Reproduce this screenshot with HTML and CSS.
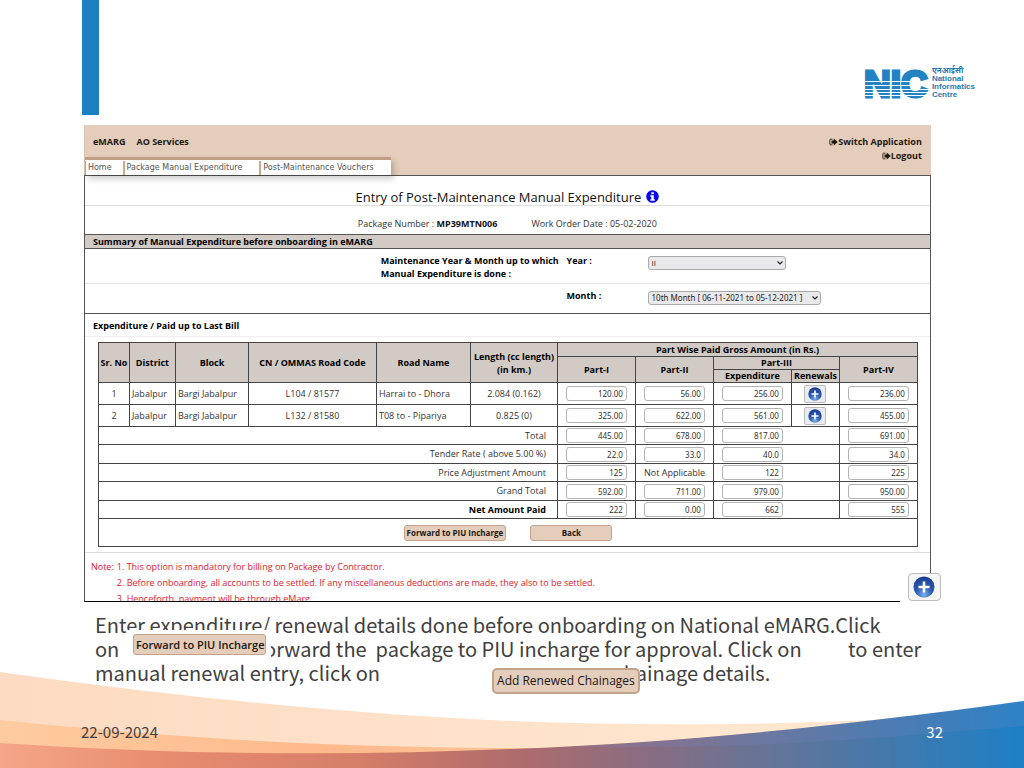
FILE: index.html
```
<!DOCTYPE html>
<html lang="en">
<head>
<meta charset="utf-8">
<meta name="viewport" content="width=device-width, initial-scale=1">
<title>Entry of Post-Maintenance Manual Expenditure</title>
<link rel="stylesheet" href="styles.css">
</head>
<body>
<svg width="0" height="0" class="defs" aria-hidden="true">
  <defs>
    <radialGradient id="ball" cx="50%" cy="85%" r="80%">
      <stop offset="0" stop-color="#7db4e8"/><stop offset="0.45" stop-color="#2f5db5"/><stop offset="1" stop-color="#1c3f93"/>
    </radialGradient>
    <symbol id="plus" viewBox="0 0 22 22">
      <circle cx="11" cy="11" r="10.5" fill="url(#ball)"/>
      <path d="M11 5.5v11M5.5 11h11" stroke="#fff" stroke-width="2.6"/>
    </symbol>
    <symbol id="exit" viewBox="0 0 16 14">
      <path d="M6 2H3Q1.500 2 1.500 3.500V10.500Q1.500 12 3 12H6" fill="none" stroke="currentColor" stroke-width="1.600"/>
      <path d="M4.500 4.500H8.500V0.800L15.500 7L8.500 13.200V9.500H4.500Z" fill="currentColor"/>
    </symbol>
  </defs>
</svg>
<div class="slide">
  <header class="slide-head">
    <div class="accent"></div>
    <div class="logo">
      <svg class="logo-mark" width="66" height="32" viewBox="0 0 66 32" role="img" aria-label="NIC">
        <text x="0" y="30" class="logo-letters">NIC</text>
        <path d="M-2 14.500H66M-2 18.500H66M-2 22.500H66M-2 25.500H66M-2 28.500H66" stroke="#fff" stroke-width="1"/>
      </svg>
      <div class="logo-words"><span>एनआईसी</span><span>National</span><span>Informatics</span><span>Centre</span></div>
    </div>
  </header>

  <main class="main">
    <section class="app">
      <div class="app-head">
        <div class="app-top">
          <nav class="menu"><a href="#">eMARG</a><a href="#">AO Services</a></nav>
          <div class="session">
            <a href="#"><svg width="9" height="8"><use href="#exit"/></svg>Switch Application</a>
            <a href="#"><svg width="9" height="8"><use href="#exit"/></svg>Logout</a>
          </div>
        </div>
        <nav class="tabs"><a href="#">Home</a><a href="#">Package Manual Expenditure</a><a href="#">Post-Maintenance Vouchers</a></nav>
      </div>
      <div class="app-body">
        <h1 class="title">Entry of Post-Maintenance Manual Expenditure
          <svg width="13" height="13" viewBox="0 0 13 13" role="img" aria-label="Info"><circle cx="6.500" cy="6.500" r="6.300" fill="#0505ee"/><path d="M5.300 2.200h2.500v2H5.300zM4.300 5.300h3.500v4h1v1.500H4.300V9.300h1V6.800h-1z" fill="#fff"/></svg>
        </h1>
        <div class="package"><span>Package Number : <b>MP39MTN006</b></span><span>Work Order Date : 05-02-2020</span></div>
        <h2 class="summary">Summary of Manual Expenditure before onboarding in eMARG</h2>
        <div class="form-row">
          <span class="form-caption">Maintenance Year &amp; Month up to which Manual Expenditure is done :</span>
          <label for="year">Year :</label>
          <div class="select select-year"><select id="year"><option>II</option></select><svg width="6" height="4" viewBox="0 0 6 4"><path d="M0.500 0.500L3 3L5.500 0.500" fill="none" stroke="#222" stroke-width="1.200"/></svg></div>
        </div>
        <div class="form-row form-row-last">
          <span></span>
          <label for="month">Month :</label>
          <div class="select select-month"><select id="month"><option>10th Month [ 06-11-2021 to 05-12-2021 ]</option></select><svg width="6" height="4" viewBox="0 0 6 4"><path d="M0.500 0.500L3 3L5.500 0.500" fill="none" stroke="#222" stroke-width="1.200"/></svg></div>
        </div>
        <h2 class="subhead">Expenditure / Paid up to Last Bill</h2>
        <div class="table-wrap">
          <table class="grid">
            <colgroup><col class="c-sr"><col class="c-district"><col class="c-block"><col class="c-code"><col class="c-road"><col class="c-length"><col class="c-part"><col class="c-part"><col class="c-part"><col class="c-renew"><col class="c-part"></colgroup>
            <thead>
              <tr class="r-head"><th rowspan="3">Sr. No</th><th rowspan="3">District</th><th rowspan="3">Block</th><th rowspan="3">CN / OMMAS Road Code</th><th rowspan="3">Road Name</th><th rowspan="3" class="tall">Length (cc length)<br>(in km.)</th><th colspan="5">Part Wise Paid Gross Amount (in Rs.)</th></tr>
              <tr class="r-head"><th rowspan="2">Part-I</th><th rowspan="2">Part-II</th><th colspan="2">Part-III</th><th rowspan="2">Part-IV</th></tr>
              <tr class="r-head"><th>Expenditure</th><th>Renewals</th></tr>
            </thead>
            <tbody>
              <tr class="r-road"><td class="mid">1</td><td>Jabalpur</td><td>Bargi Jabalpur</td><td class="mid">L104 / 81577</td><td>Harrai to - Dhora</td><td class="mid">2.084 (0.162)</td>
                <td class="amt"><input aria-label="Road 1 Part-I" value="120.00"></td><td class="amt"><input aria-label="Road 1 Part-II" value="56.00"></td><td class="amt"><input aria-label="Road 1 Part-III" value="256.00"></td><td class="mid"><button class="add" aria-label="Add renewal for road 1"><svg width="14" height="14"><use href="#plus"/></svg></button></td><td class="amt"><input aria-label="Road 1 Part-IV" value="236.00"></td></tr>
              <tr class="r-road"><td class="mid">2</td><td>Jabalpur</td><td>Bargi Jabalpur</td><td class="mid">L132 / 81580</td><td>T08 to - Pipariya</td><td class="mid">0.825 (0)</td>
                <td class="amt"><input aria-label="Road 2 Part-I" value="325.00"></td><td class="amt"><input aria-label="Road 2 Part-II" value="622.00"></td><td class="amt"><input aria-label="Road 2 Part-III" value="561.00"></td><td class="mid"><button class="add" aria-label="Add renewal for road 2"><svg width="14" height="14"><use href="#plus"/></svg></button></td><td class="amt"><input aria-label="Road 2 Part-IV" value="455.00"></td></tr>
              <tr class="r-sum"><td colspan="6" class="sum">Total</td><td class="amt"><input aria-label="Total Part-I" value="445.00"></td><td class="amt"><input aria-label="Total Part-II" value="678.00"></td><td colspan="2" class="amt"><input aria-label="Total Part-III" value="817.00"></td><td class="amt"><input aria-label="Total Part-IV" value="691.00"></td></tr>
              <tr class="r-sum"><td colspan="6" class="sum">Tender Rate ( above 5.00 %)</td><td class="amt"><input aria-label="Tender rate Part-I" value="22.0"></td><td class="amt"><input aria-label="Tender rate Part-II" value="33.0"></td><td colspan="2" class="amt"><input aria-label="Tender rate Part-III" value="40.0"></td><td class="amt"><input aria-label="Tender rate Part-IV" value="34.0"></td></tr>
              <tr class="r-sum"><td colspan="6" class="sum">Price Adjustment Amount</td><td class="amt"><input aria-label="Price adjustment Part-I" value="125"></td><td class="amt">Not Applicable</td><td colspan="2" class="amt"><input aria-label="Price adjustment Part-III" value="122"></td><td class="amt"><input aria-label="Price adjustment Part-IV" value="225"></td></tr>
              <tr class="r-sum"><td colspan="6" class="sum">Grand Total</td><td class="amt"><input aria-label="Grand total Part-I" value="592.00"></td><td class="amt"><input aria-label="Grand total Part-II" value="711.00"></td><td colspan="2" class="amt"><input aria-label="Grand total Part-III" value="979.00"></td><td class="amt"><input aria-label="Grand total Part-IV" value="950.00"></td></tr>
              <tr class="r-sum"><td colspan="6" class="sum"><b>Net Amount Paid</b></td><td class="amt"><input aria-label="Net amount Part-I" value="222"></td><td class="amt"><input aria-label="Net amount Part-II" value="0.00"></td><td colspan="2" class="amt"><input aria-label="Net amount Part-III" value="662"></td><td class="amt"><input aria-label="Net amount Part-IV" value="555"></td></tr>
              <tr class="r-actions"><td colspan="11"><div class="actions"><button class="btn">Forward to PIU Incharge</button><button class="btn">Back</button></div></td></tr>
            </tbody>
          </table>
        </div>
        <div class="notes"><span>Note:</span><ol><li>1. This option is mandatory for billing on Package by Contractor.</li><li>2. Before onboarding, all accounts to be settled. If any miscellaneous deductions are made, they also to be settled.</li><li>3. Henceforth, payment will be through eMarg.</li></ol></div>
      </div>
      <div class="patch patch-plus"><button class="add add-large" aria-label="Add"><svg width="22" height="22"><use href="#plus"/></svg></button></div>
    </section>

    <section class="caption">
      <p>Enter expenditure/ renewal details done before onboarding on National eMARG.Click<br>on <span class="gap gap-forward"></span>forward the&nbsp; package to PIU incharge for approval. Click on <span class="gap gap-plus"></span>to enter<br>manual renewal entry, click on <span class="gap gap-chainage"></span>chainage details.</p>
      <div class="patch patch-forward"><button class="btn btn-medium">Forward to PIU Incharge</button></div>
      <div class="patch patch-chainage"><button class="btn btn-large">Add Renewed Chainages</button></div>
    </section>
  </main>

  <footer class="footer"><span>22-09-2024</span><span class="page-no">32</span></footer>
  <svg class="wave" viewBox="0 0 1024 108" preserveAspectRatio="none" aria-hidden="true">
    <defs>
      <linearGradient id="peach"><stop offset="0" stop-color="#fddbc2"/><stop offset="1" stop-color="#ffe8d0"/></linearGradient>
      <linearGradient id="orange"><stop offset="0" stop-color="#fecba0"/><stop offset="0.600" stop-color="#feb98c"/><stop offset="1" stop-color="#fec495"/></linearGradient>
      <linearGradient id="sweep" gradientUnits="userSpaceOnUse" x1="0" y1="0" x2="1024" y2="0">
        <stop offset="0" stop-color="#f5a688"/><stop offset="0.150" stop-color="#e98d70"/><stop offset="0.350" stop-color="#d57e68"/><stop offset="0.500" stop-color="#b06c6c"/><stop offset="0.620" stop-color="#8d6c80"/><stop offset="0.730" stop-color="#6b7394"/><stop offset="0.850" stop-color="#4878a9"/><stop offset="1" stop-color="#1d80c6"/>
      </linearGradient>
    </defs>
    <path d="M0 12C128 30 300 51 512 61C640 66 760 65 870 60V100H0Z" fill="url(#peach)"/>
    <path d="M0 60C150 75 300 88 540 88V100H0Z" fill="url(#orange)"/>
    <path d="M0 83C180 95 350 96 512 89C690 82 850 65 1024 41V108H0Z" fill="url(#sweep)"/>
    <path d="M570 87C730 78 860 63 1024 41V66C900 76 760 90 570 87Z" fill="#7f8ccc" opacity="0.180"/>
  </svg>
</div>
</body>
</html>
```
FILE: styles.css
```
* { box-sizing: border-box; }
body { margin: 0; background: #fff; color: #333; font-family: "Open Sans", "Noto Sans", sans-serif; font-size: 9px; line-height: 13px; }
a { color: inherit; text-decoration: none; }
button, input, select { font: inherit; color: inherit; margin: 0; }
h1, h2, p, ol { margin: 0; padding: 0; }
.defs { position: absolute; }
.slide { position: relative; min-height: 100vh; display: flex; flex-direction: column; overflow: hidden; }

.slide-head { display: flex; justify-content: space-between; align-items: flex-start; height: 125px; padding: 0 49px 0 8%; }
.accent { width: 17px; height: 115px; background: #1c7fc4; }
.logo { display: flex; gap: 2px; padding-top: 67px; }
.logo-mark { overflow: visible; }
.logo-letters { font: bold 37px "Liberation Sans", Arial, sans-serif; fill: #2282c3; stroke: #2282c3; stroke-width: 3; }
.logo-words { display: flex; flex-direction: column; color: #2b78ae; font: bold 8px/8px "Liberation Sans", "Noto Sans", sans-serif; }

.main { position: relative; z-index: 1; padding: 0 9.1% 0 8.2%; }
.app { position: relative; }
.app-head { background: #e4cdbb; height: 50px; display: flex; flex-direction: column; justify-content: space-between; border-left: 1px solid #d8c3b2; }
.app-top { display: flex; justify-content: space-between; padding: 10px 9px 0 8px; color: #1d1712; font-weight: 700; line-height: 14px; height: 32px; }
.menu { display: flex; gap: 11px; }
.session { display: flex; flex-direction: column; align-items: flex-end; }
.session svg { vertical-align: -1px; }
.tabs { position: relative; align-self: flex-start; display: flex; padding-top: 1px; border-top: 3px solid #c19d86; background: #fff; color: #555; font: 8px/14px "DejaVu Sans", Verdana, sans-serif; box-shadow: 3px 4px 6px rgba(0, 0, 0, 0.2); }
.tabs a { padding: 0 17px 0 2px; border-left: 2px solid #d0a78d; }
.tabs a:first-child { border-left: 1px solid #aaa; padding-right: 11px; }

.app-body { border: 1px solid #555; border-bottom-color: #000; height: 427px; overflow: hidden; }
.title { display: flex; justify-content: center; align-items: center; gap: 5px; height: 30px; padding-top: 12px; border-bottom: 1px solid #ddd; color: #111; font-size: 13px; font-weight: 400; line-height: 18px; }
.package { display: flex; justify-content: center; gap: 34px; height: 28px; padding-top: 11px; }
.package b { color: #111; }
.summary { background: #d1cac5; border: solid #555; border-width: 1px 0; height: 15px; padding-left: 8px; color: #000; font-size: 9px; font-weight: 700; line-height: 13px; }
.form-row { display: grid; grid-template-columns: 35% 22% 81px 1fr; height: 35px; padding-top: 5px; border-bottom: 1px solid #e4e4e4; color: #000; font-weight: 700; }
.form-row > :first-child { grid-column: 2; }
.form-row-last { height: 30px; border-bottom-color: #555; }
.select { position: relative; margin-top: 2px; height: 14px; }
.select select { appearance: none; width: 100%; height: 14px; padding: 0 6px 0 3px; border: 1px solid #aaa; border-radius: 3px; background: #e9e9ec; color: #222; font-size: 8px; font-weight: 400; line-height: 12px; display: block; }
.select-month select { font-family: "Noto Sans", sans-serif; }
.select svg { position: absolute; right: 3px; top: 5px; pointer-events: none; }
.select-year { width: 138px; }
.select-month { width: 173px; }
.subhead { height: 23px; padding: 5px 8px 0; border-bottom: 1px solid #eee; color: #000; font-size: 9px; font-weight: 700; }

.table-wrap { padding: 5px 13px; border-bottom: 1px solid #ddd; }
.grid { width: 100%; border-collapse: collapse; table-layout: fixed; }
.grid th, .grid td { border: 1px solid #444; padding: 0 2px; white-space: nowrap; }
.grid th { background: #d1cac5; color: #000; font-weight: 700; padding: 0; }
.grid .mid { text-align: center; }
.grid .amt { padding: 0 0 0 8px; }
.grid .sum { text-align: right; padding-right: 11px; }
.grid b { color: #000; }
.grid input { display: block; width: 61px; height: 15px; padding: 0 3px; border: 1px solid #b4b4b4; border-radius: 3px; background: #fff; text-align: right; font-family: "Noto Sans", sans-serif; font-size: 8px; line-height: 12px; }
.c-sr { width: 31px; } .c-district { width: 46px; } .c-block { width: 73px; } .c-code { width: 128px; } .c-road { width: 94px; }
.c-length { width: 87px; } .c-part { width: 78px; } .c-renew { width: 48px; }
.r-head { height: 13px; line-height: 12px; }
.r-head:first-child { height: 14px; }
.r-head .tall { line-height: 13px; }
.r-road { height: 22px; }
.r-sum { height: 18px; }
.r-sum:nth-child(even) { height: 19px; }
.r-actions { height: 28px; }
.grid .r-sum td { line-height: 12px; }
.add { display: inline-flex; align-items: center; justify-content: center; width: 22px; height: 18px; padding: 0; border: 1px solid #bbb; border-radius: 2px; background: #e9ecf1; vertical-align: middle; }
.add-large { width: 33px; height: 28px; border-radius: 4px; background: #f6f6f6; }
.actions { display: flex; gap: 24px; justify-content: center; }
.btn { height: 16px; min-width: 82px; padding: 0 2px; border: 1px solid #c3a28c; border-radius: 3px; background: #e4cdbb; color: #1d1712; font-size: 8px; font-weight: 700; line-height: 13px; white-space: nowrap; }
.notes { display: flex; gap: 3px; padding: 6px 6px 0; color: #e0202c; line-height: 16px; }
.notes ol { list-style: none; }

.patch { position: absolute; background: #fff; }
.patch-plus { right: -11px; bottom: 0; width: 42px; height: 29px; padding-left: 8px; }
.caption { position: relative; padding: 11px 0 0 11px; color: #404040; font: 20px/24px "Noto Sans CJK SC", "Source Sans Pro", sans-serif; white-space: nowrap; }
.gap { display: inline-block; }
.gap-forward { width: 134px; }
.gap-plus { width: 42px; }
.gap-chainage { width: 229px; }
.patch-forward { left: 43px; top: 28px; width: 144px; height: 32px; padding: 4px 6px; line-height: 20px; }
.patch-chainage { left: 408px; top: 66px; }
.btn-medium { display: block; width: 133px; height: 21px; font: 600 11px/18px "Open Sans", "Noto Sans", sans-serif; }
.btn-large { display: block; height: 26px; width: 148px; border-width: 2px; border-radius: 5px; font: 500 12px/22px "Open Sans", "Noto Sans", sans-serif; }

.footer { position: relative; z-index: 1; display: flex; justify-content: space-between; margin-top: auto; padding: 0 81px 26px; color: #404040; font: 15px/20px "Noto Sans CJK SC", sans-serif; }
.page-no { color: #fff; }
.wave { position: absolute; left: 0; bottom: 0; width: 100%; height: 108px; }
```
